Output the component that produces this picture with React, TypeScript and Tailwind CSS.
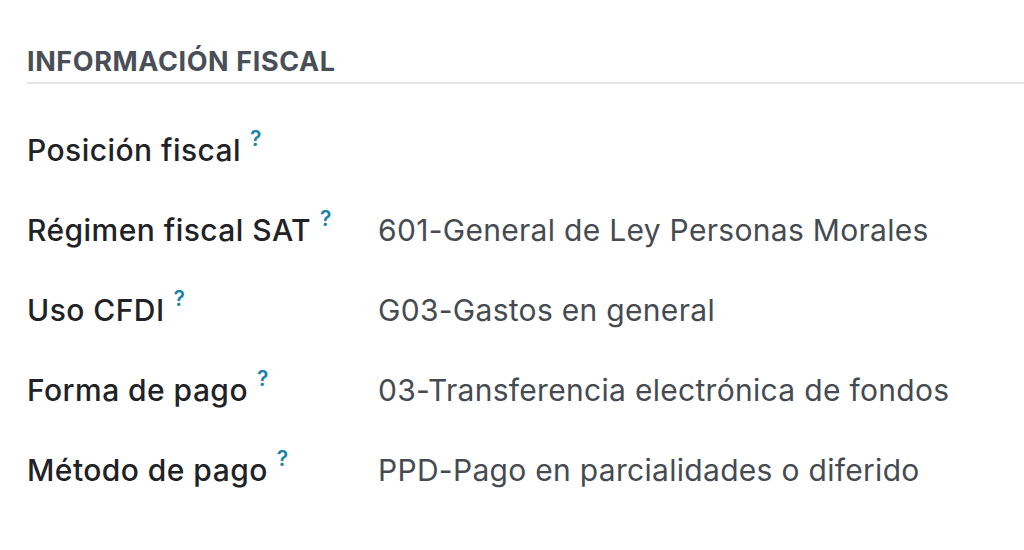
const rows = [
  { label: 'Posición fiscal', value: '' },
  { label: 'Régimen fiscal SAT', value: '601-General de Ley Personas Morales' },
  { label: 'Uso CFDI', value: 'G03-Gastos en general' },
  { label: 'Forma de pago', value: '03-Transferencia electrónica de fondos' },
  { label: 'Método de pago', value: 'PPD-Pago en parcialidades o diferido' },
]

export default function App() {
  return (
    <div className="w-[1024px] h-[550px] bg-white overflow-hidden pl-[27px] pt-[47px]" style={{ fontFamily: 'Inter, "Noto Sans", sans-serif' }}>
      <div className="border-b-2 border-[#e4e6e9] pb-[5px]">
        <h2 className="text-[27px] leading-[30px] font-bold text-[#4a4f57] tracking-[0.6px]">INFORMACIÓN FISCAL</h2>
      </div>
      <div className="flex flex-col gap-[44px] pt-[48px]">
        {rows.map((r) => (
          <div key={r.label} className="flex items-center h-[36px]">
            <div className="w-[351px] shrink-0 text-[30px] leading-[36px] font-medium text-[#1f2226] whitespace-nowrap tracking-[0.45px]">
              {r.label}
              <span className="inline-block align-top ml-[9px] text-[21px] leading-none font-semibold text-[#1a84a8] relative top-[-4px]">?</span>
            </div>
            <div className="text-[30px] leading-[36px] text-[#464b52] tracking-[0.3px]">{r.value}</div>
          </div>
        ))}
      </div>
    </div>
  )
}
